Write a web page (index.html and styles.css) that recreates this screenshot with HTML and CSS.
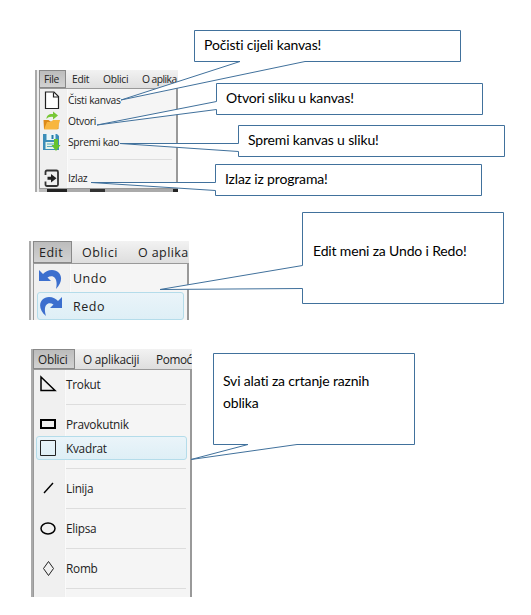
FILE: index.html
```html
<!DOCTYPE html>
<html lang="hr">
<head>
<meta charset="utf-8">
<title>Izbornici</title>
<link rel="stylesheet" href="styles.css">
</head>
<body>
<main class="page">
  <section class="shot file-shot">
    <nav class="bar"><span class="tab active">File</span><span class="tab">Edit</span><span class="tab">Oblici</span><span class="tab">O aplika</span></nav>
    <div class="menu">
      <div class="item"><svg class="icon" viewBox="0 0 20 20"><path d="M3.500 2h8.500l4.500 4.500v12h-13z" fill="#fff" stroke="#222" stroke-width="1.200"/><path d="M11.500 2.500v4.500h4.500" fill="none" stroke="#222" stroke-width="1.200"/></svg><span>Čisti kanvas</span></div>
      <div class="item"><svg class="icon" viewBox="0 0 20 20"><path d="M1.500 9h5l2 1.500h8V18H2z" fill="#dc8a18"/><path d="M5 11h4l2-2h7l-2.500 9.500H2z" fill="#f8b63f"/><path d="M4.500 8c0-4 3-5.500 6.500-5V.5L16 4.500l-5 4V6C8 5.500 6 6.500 4.500 8z" fill="#78c736"/></svg><span>Otvori</span></div>
      <div class="item"><svg class="icon" viewBox="0 0 20 20"><path d="M1 2h14l2 2v14H1z" fill="#3c8db8"/><path d="M4.500 2h9v6h-9z" fill="#e8f6fa"/><path d="M9.500 3h2v4h-2z" fill="#267aa5"/><path d="M3.500 10h11v7h-11z" fill="#e7f4e9"/><path d="M5 12h7M5 14.500h7" stroke="#57a7bd"/><path d="M12 7h4v6h2.500L14 19l-4.500-6H12z" fill="#65c32e"/></svg><span>Spremi kao</span></div>
      <div class="separator"></div>
      <div class="item"><svg class="icon" viewBox="0 0 20 20"><path d="M3.500 7V4q0-1.500 1.500-1.500h9.500Q16 2.500 16 4v12.500q0 1.500-1.500 1.500H5q-1.500 0-1.500-1.500v-3" fill="none" stroke="#333" stroke-width="1.800"/><path d="M5.500 8.800h3.500V6l5.500 4.200L9 14.500v-2.700H5.500z" fill="#222"/></svg><span>Izlaz</span></div>
    </div>
    <div class="canvas-edge"></div>
  </section>

  <section class="shot edit-shot">
    <nav class="bar"><span class="tab active">Edit</span><span class="tab">Oblici</span><span class="tab">O aplika</span></nav>
    <div class="menu">
      <div class="item"><svg class="icon" viewBox="0 0 26 22"><path d="M1 2v11h12L9.500 9.500C15 6 20.500 10 18 21 27 12 23 2 14 2 10 2 7 4 5 6z" fill="#3c6fce"/></svg><span>Undo</span></div>
      <div class="item selected"><svg class="icon" viewBox="0 0 26 22"><path d="M24 2v11H12l3.500-3.500C10 6 4.500 10 8 21-2 13 2 2 11 2c4 0 7 2 9 4z" fill="#3c6fce"/></svg><span>Redo</span></div>
    </div>
  </section>

  <section class="shot shapes-shot">
    <nav class="bar"><span class="tab active">Oblici</span><span class="tab">O aplikaciji</span><span class="tab">Pomoć</span></nav>
    <div class="menu">
      <div class="item"><svg class="icon" viewBox="0 0 20 20"><path d="M3 3v13.500H17z" fill="none" stroke="#000" stroke-width="1.500"/></svg><span>Trokut</span></div>
      <div class="separator"></div>
      <div class="item"><svg class="icon" viewBox="0 0 20 20"><path d="M3 6h14v8H3z" fill="none" stroke="#000" stroke-width="2"/></svg><span>Pravokutnik</span></div>
      <div class="item selected"><svg class="icon" viewBox="0 0 20 20"><path d="M2.500 2.500h15v15h-15z" fill="none" stroke="#222"/></svg><span>Kvadrat</span></div>
      <div class="separator"></div>
      <div class="item"><svg class="icon" viewBox="0 0 20 20"><path d="M6 15l9-10" stroke="#000" stroke-width="1.400"/></svg><span>Linija</span></div>
      <div class="separator"></div>
      <div class="item"><svg class="icon" viewBox="0 0 20 20"><ellipse cx="10" cy="10.500" rx="7" ry="5.500" fill="none" stroke="#000" stroke-width="1.500"/></svg><span>Elipsa</span></div>
      <div class="separator"></div>
      <div class="item"><svg class="icon" viewBox="0 0 20 20"><path d="M10.500 3.500l5 7-5 7-5-7z" fill="none" stroke="#222"/></svg><span>Romb</span></div>
      <div class="separator"></div>
    </div>
  </section>

  <svg class="pointers" viewBox="0 0 531 615">
    <path d="M240 61.500h-45.500v-31h266v31H305L121 100z"/>
    <path d="M216.500 101.500v-18h266v31h-266v-5L97 125z"/>
    <path d="M238.500 143.500v-18h266v31h-266v-5L120 143.500z"/>
    <path d="M215.500 182.500v-18h266v31h-266v-5L91 182.500z"/>
    <path d="M302.500 265.500v-53h201v91h-201v-15L160 289.500z"/>
    <path d="M248 444.500h-34.500v-91h201v91H297L191 459.500z"/>
  </svg>
  <p class="note note-clear">Počisti cijeli kanvas!</p>
  <p class="note note-open">Otvori sliku u kanvas!</p>
  <p class="note note-save">Spremi kanvas u sliku!</p>
  <p class="note note-exit">Izlaz iz programa!</p>
  <p class="note note-edit">Edit meni za Undo i Redo!</p>
  <p class="note note-shapes">Svi alati za crtanje raznih<br>oblika</p>
</main>
</body>
</html>
```

FILE: styles.css
```css
* { box-sizing: border-box; }
body { margin: 0; background: #fff; }
.page {
  position: relative;
  width: 531px;
  height: 615px;
  padding: 70px 0 0 29px;
  overflow: hidden;
  font-family: "Open Sans", "Noto Sans", sans-serif;
  color: #222;
}
.shot { overflow: hidden; border-left: 2px solid #aaa; background: #eee; }
.bar {
  display: flex;
  overflow: hidden;
  white-space: nowrap;
  background: linear-gradient(#f2f2f2, #dedede);
}
.tab { display: block; flex: none; }
.active { border: 1px solid #888; background: linear-gradient(#bcbcbc, #d2d2d2); }
.menu {
  border: 1px solid #999;
  border-width: 1px 2px 0 1px;
  background: linear-gradient(90deg, #f0f0f0 var(--gutter), #dedede var(--gutter), #fff calc(var(--gutter) + 1px), #f5f5f5 calc(var(--gutter) + 2px));
}
.item { display: flex; align-items: center; white-space: nowrap; border: 1px solid transparent; }
.icon { flex: none; display: block; }
.separator { display: flex; align-items: center; }
.separator::after { content: ""; flex: 1; height: 1px; background: #ddd; }
.selected { border-color: #b4dcea; border-radius: 3px; background: linear-gradient(#eaf4f9, #deeff6); }

.file-shot { --gutter: 26px; width: 143px; height: 122px; margin-left: 6px; padding-left: 2px; font-size: 10.3px; letter-spacing: -.3px; }
.file-shot .bar { height: 18px; line-height: 18px; }
.file-shot .tab { width: 31px; padding-left: 3px; }
.file-shot .active { width: 27px; margin-right: 3px; padding-left: 4px; line-height: 16px; }
.file-shot .tab:nth-child(3) { width: 40px; }
.file-shot .tab:nth-child(4) { width: auto; padding-left: 2px; letter-spacing: -.55px; }
.file-shot .menu { height: 101px; border-bottom: 1px solid #999; }
.file-shot .item { height: 21px; padding-left: 1px; }
.file-shot .icon { width: 20px; height: 20px; margin-right: 6px; }
.file-shot .separator { height: 15px; padding: 0 4px 0 30px; }
.canvas-edge { height: 3px; background: linear-gradient(90deg, #bbb 8px, #222 8px 28px, #aaa 28px 51px, #333 51px 66px, #aaa 66px 134px, #222 134px); }

.edit-shot { --gutter: 35px; width: 160px; height: 79px; margin-top: 49px; padding-left: 2px; font-size: 12.5px; letter-spacing: .5px; }
.edit-shot .bar { height: 22px; line-height: 23px; }
.edit-shot .active { width: 39px; padding-left: 5px; line-height: 22px; }
.edit-shot .tab:nth-child(2) { width: 66px; padding-left: 10px; }
.edit-shot .tab:nth-child(3) { letter-spacing: .4px; }
.edit-shot .menu { height: 58px; padding: 1px 3px 0; }
.edit-shot .item { height: 27px; }
.edit-shot .selected { height: 28px; }
.edit-shot .icon { width: 26px; height: 22px; margin-right: 9px; }

.shapes-shot { --gutter: 30px; width: 161px; height: 248px; margin: 29px 0 0 2px; font-size: 11.8px; letter-spacing: -.25px; }
.shapes-shot .bar { height: 20px; line-height: 20px; }
.shapes-shot .active { width: 42px; padding-left: 4px; line-height: 18px; }
.shapes-shot .tab:nth-child(2) { width: 73px; padding-left: 8px; }
.shapes-shot .tab:nth-child(3) { padding-left: 8px; letter-spacing: -.4px; }
.shapes-shot .menu { height: 229px; padding: 2px 3px 0 2px; }
.shapes-shot .item { height: 24px; padding-left: 1px; }
.shapes-shot .icon { width: 20px; height: 20px; margin-right: 8px; }
.shapes-shot .separator { height: 16px; padding: 0 1px 0 30px; }

.pointers { position: absolute; inset: 0; width: 531px; height: 615px; fill: #fff; stroke: #41719c; }
.note { position: absolute; margin: 0; font: 14px/22px Lato, "Liberation Sans", sans-serif; letter-spacing: -.16px; color: #000; white-space: nowrap; }
.note-clear { left: 204px; top: 34px; }
.note-open { left: 226px; top: 87px; }
.note-save { left: 248px; top: 129px; }
.note-exit { left: 225px; top: 168px; }
.note-edit { left: 313px; top: 240px; }
.note-shapes { left: 223px; top: 370px; }
```
